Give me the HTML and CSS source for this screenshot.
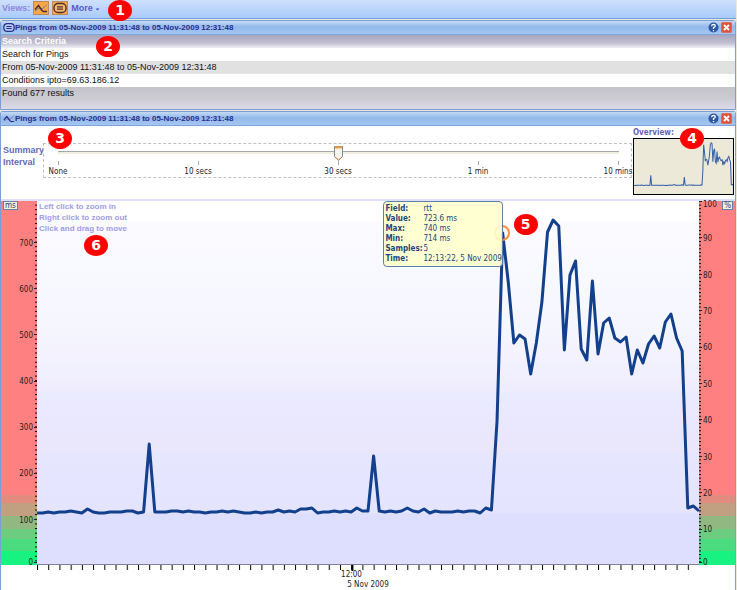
FILE: index.html
```html
<!DOCTYPE html>
<html lang="en">

<head>
    <meta charset="UTF-8">
    <meta name="viewport" content="width=device-width, initial-scale=1.0">
    <title>Pings</title>
    <link rel="stylesheet" href="styles.css">
</head>

<body>

    <!-- Icons used more than once -->
    <svg class="sprite" aria-hidden="true">
        <symbol id="wave" viewBox="0 0 14 12">
            <path d="M1 9 L4.5 6.5 L8 7 L12.5 3" fill="none" stroke="#77778c" stroke-width="1" />
            <path d="M1 7.5 L4.5 3.5 L8 8.5 Q9 9.8 10.5 9.5 H13" fill="none" stroke="currentColor" stroke-width="1.4" />
        </symbol>
        <symbol id="list" viewBox="0 0 14 12">
            <rect x="1" y="1.5" width="12" height="9" rx="4" fill="#ffffff33" stroke="currentColor" stroke-width="1.4" />
            <path d="M4 4.8h6M4 7.2h6" stroke="currentColor" stroke-width="1.2" />
        </symbol>
        <symbol id="help" viewBox="0 0 10 10">
            <circle cx="5" cy="5" r="4.5" fill="#2c57a4" />
            <path d="M3.3 3.8 Q3.4 2.2 5 2.2 Q6.8 2.3 6.6 3.8 Q6.4 4.6 5 5.2 V6.3 M5 7.2 V8.4" fill="none" stroke="#fff" stroke-width="1.2" />
        </symbol>
        <symbol id="close" viewBox="0 0 11 11">
            <rect x="0.5" y="0.5" width="10" height="10" rx="1" fill="#dd5340" stroke="#e06a58" />
            <path d="M3 3l5 5M8 3l-5 5" stroke="#fff" stroke-width="1.8" />
        </symbol>
    </svg>

    <nav class="toolbar">
        <span class="toolbar-label">Views:</span>
        <button class="view-button" aria-label="Graph view"><svg><use href="#wave" /></svg></button>
        <button class="view-button" aria-label="List view"><svg><use href="#list" /></svg></button>
        <button class="more-button">More <svg class="caret" viewBox="0 0 5 3"><path d="M0.5 0.5h4L2.5 2.5z" fill="#4a4ac0" /></svg></button>
        <span class="callout callout-1">1</span>
    </nav>

    <section class="panel criteria-panel">
        <header class="title-bar">
            <svg class="title-icon"><use href="#list" /></svg>
            <h2>Pings from 05-Nov-2009 11:31:48 to 05-Nov-2009 12:31:48</h2>
            <button class="title-button" aria-label="Help"><svg><use href="#help" /></svg></button>
            <button class="title-button" aria-label="Close"><svg><use href="#close" /></svg></button>
        </header>
        <table class="criteria">
            <thead>
                <tr><th>Search Criteria</th></tr>
            </thead>
            <tbody>
                <tr><td>Search for Pings</td></tr>
                <tr class="shaded"><td>From 05-Nov-2009 11:31:48 to 05-Nov-2009 12:31:48</td></tr>
                <tr><td>Conditions ipto=69.63.186.12</td></tr>
                <tr class="found"><td>Found 677 results</td></tr>
            </tbody>
        </table>
        <div class="criteria-foot"></div>
        <span class="callout callout-2">2</span>
    </section>

    <section class="panel graph-panel">
        <header class="title-bar">
            <svg class="title-icon"><use href="#wave" /></svg>
            <h2>Pings from 05-Nov-2009 11:31:48 to 05-Nov-2009 12:31:48</h2>
            <button class="title-button" aria-label="Help"><svg><use href="#help" /></svg></button>
            <button class="title-button" aria-label="Close"><svg><use href="#close" /></svg></button>
        </header>

        <div class="controls">
            <label class="interval-label" for="interval">Summary<br>Interval</label>
            <div class="interval">
                <input type="range" id="interval" min="0" max="4" value="2">
                <div class="interval-marks">
                    <span>None</span>
                    <span>10 secs</span>
                    <span>30 secs</span>
                    <span>1 min</span>
                    <span>10 mins</span>
                </div>
            </div>
            <div class="overview">
                <div class="overview-label">Overview:</div>
                <svg class="overview-graph" viewBox="0 0 118 364" preserveAspectRatio="none">
                    <use href="#rtt" class="overview-line" />
                </svg>
            </div>
            <span class="callout callout-3">3</span>
            <span class="callout callout-4">4</span>
        </div>

        <div class="graph">
            <div class="axis left-axis">
                <svg width="36" height="364">
                    <defs>
                        <pattern id="ms-ticks" y="364" width="3" height="4.62" patternUnits="userSpaceOnUse">
                            <rect width="3" height="1" />
                        </pattern>
                    </defs>
                    <rect x="34" width="2" height="364" fill="url(#ms-ticks)" />
                    <path d="M33 41.5h3M33 87.5h3M33 133.5h3M33 180.5h3M33 226.5h3M33 272.5h3M33 318.5h3M33 361.5h3" stroke="#222" />
                    <g text-anchor="end">
                        <text x="32" y="45">700</text>
                        <text x="32" y="91">600</text>
                        <text x="32" y="137">500</text>
                        <text x="32" y="183">400</text>
                        <text x="32" y="229">300</text>
                        <text x="32" y="275">200</text>
                        <text x="32" y="322">100</text>
                        <text x="32" y="364">0</text>
                    </g>
                </svg>
                <span class="unit">ms</span>
            </div>

            <div class="plot">
                <svg class="plot-line" viewBox="0 0 118 364" preserveAspectRatio="none">
                    <polyline id="rtt" vector-effect="non-scaling-stroke" points="
                        0,312 1,312 2,311 3,312 4,311 5,311 6,310 7,311 8,312 9,308
                        10,311 11,312 12,312 13,311 14,311 15,311 16,310 17,310 18,312 19,311
                        20,243 21,311 22,311 23,311 24,310 25,310 26,311 27,310 28,311 29,311
                        30,312 31,311 32,311 33,310 34,311 35,310 36,311 37,312 38,312 39,311
                        40,312 41,311 42,311 43,309 44,311 45,310 46,311 47,308 48,308 49,307
                        50,312 51,311 52,311 53,310 54,311 55,310 56,311 57,307 58,310 59,310
                        60,255 61,310 62,311 63,310 64,311 65,310 66,307 67,310 68,311 69,308
                        70,312 71,310 72,311 73,311 74,311 75,310 76,311 77,310 78,310 79,312
                        80,307 81,309 82,220 83,32 84,81 85,142 86,134 87,138 88,173 89,142
                        90,101 91,31 92,19 93,25 94,149 95,74 96,60 97,148 98,159 99,80
                        100,153 101,122 102,117 103,137 104,141 105,136 106,173 107,149 108,162 109,143
                        110,135 111,147 112,121 113,113 114,137 115,150 116,307 117,305 118,310" />
                </svg>
                <p class="hint">Left click to zoom in<br>Right click to zoom out<br>Click and drag to move</p>
                <span class="marker"></span>
                <dl class="tooltip">
                    <dt>Field:</dt><dd>rtt</dd>
                    <dt>Value:</dt><dd>723.6 ms</dd>
                    <dt>Max:</dt><dd>740 ms</dd>
                    <dt>Min:</dt><dd>714 ms</dd>
                    <dt>Samples:</dt><dd>5</dd>
                    <dt>Time:</dt><dd>12:13:22, 5 Nov 2009</dd>
                </dl>
                <span class="callout callout-5">5</span>
                <span class="callout callout-6">6</span>
            </div>

            <div class="axis right-axis">
                <svg width="36" height="364">
                    <defs>
                        <pattern id="pct-ticks" y="364" width="3" height="3.64" patternUnits="userSpaceOnUse">
                            <rect width="3" height="1" />
                        </pattern>
                    </defs>
                    <rect width="2" height="364" fill="url(#pct-ticks)" />
                    <path d="M0 0.5h3M0 36.5h3M0 73.5h3M0 109.5h3M0 146.5h3M0 182.5h3M0 218.5h3M0 255.5h3M0 291.5h3M0 328.5h3M0 361.5h3" stroke="#222" />
                    <text x="4" y="6">100</text>
                    <text x="4" y="40">90</text>
                    <text x="4" y="77">80</text>
                    <text x="4" y="113">70</text>
                    <text x="4" y="149">60</text>
                    <text x="4" y="186">50</text>
                    <text x="4" y="222">40</text>
                    <text x="4" y="259">30</text>
                    <text x="4" y="295">20</text>
                    <text x="4" y="331">10</text>
                    <text x="4" y="364">0</text>
                </svg>
                <span class="unit">%</span>
            </div>

            <div class="time-axis">
                <svg width="100%" height="25">
                    <defs>
                        <pattern id="time-ticks" width="1.695%" height="6" patternUnits="userSpaceOnUse">
                            <rect width="1" height="6" />
                        </pattern>
                    </defs>
                    <rect width="100%" height="5" fill="url(#time-ticks)" />
                    <rect x="47.5%" width="2" height="6" />
                    <text x="47.5%" y="12" text-anchor="middle">12:00</text>
                    <text x="50%" y="22" text-anchor="middle">5 Nov 2009</text>
                </svg>
            </div>
        </div>
    </section>

</body>

</html>
```

FILE: styles.css
```css
* {
    box-sizing: border-box;
}

body {
    margin: 0;
    padding-right: 1px;
    background: #ece9d8;
    font-family: "DejaVu Sans Condensed", "DejaVu Sans", sans-serif;
    font-size: 8px;
    color: #222;
}

button {
    padding: 0;
    border: 0;
    background: none;
    font: inherit;
}

.sprite {
    position: absolute;
    width: 0;
    height: 0;
}

.toolbar {
    position: relative;
    display: flex;
    align-items: center;
    gap: 4px;
    height: 19px;
    padding: 0 2px 2px;
    border-bottom: 1px solid #6f9fdc;
    background: linear-gradient(#cfe0fb, #a9cbfa);
    font-family: "Liberation Sans", sans-serif;
    font-size: 9px;
    font-weight: bold;
}

.toolbar-label {
    color: #9088dc;
}

.view-button {
    display: flex;
    align-items: center;
    justify-content: center;
    width: 14px;
    height: 12px;
    background: #f9a54a;
    outline: 1px solid #c08a58;
    color: #4a3030;
}

.view-button svg {
    width: 14px;
    height: 12px;
}

.view-button + .view-button {
    margin-left: 1px;
}

.more-button {
    color: #5b5bc8;
}

.caret {
    width: 5px;
    height: 3px;
}

.panel {
    position: relative;
    border: 1px solid #7a9fd8;
    border-radius: 3px 3px 0 0;
}

.criteria-panel {
    margin-top: 1px;
}

.graph-panel {
    margin-top: 1px;
    border-bottom: 0;
    background: #fff;
}

.title-bar {
    display: flex;
    align-items: center;
    height: 14px;
    padding: 0 3px 0 2px;
    border-bottom: 1px solid #7fa6dc;
    background: linear-gradient(#c5daf4, #93b9ea 45%, #a4c6f2);
    color: #2c2c8c;
}

.title-bar h2 {
    flex: 1;
    margin: 0;
    font-size: 8px;
    font-family: "Liberation Sans", sans-serif;
}

.title-icon {
    width: 12px;
    height: 11px;
}

.title-button {
    display: flex;
    margin-left: 2px;
}

.title-button svg {
    width: 11px;
    height: 11px;
}

.criteria {
    width: 100%;
    border-collapse: collapse;
    font-family: "Liberation Sans", sans-serif;
    font-size: 9px;
    line-height: 13px;
    color: #111;
    background: #fff;
}

.criteria th,
.criteria td {
    padding: 0 1px;
    text-align: left;
}

.criteria th {
    background: linear-gradient(#a9a6bd, #c0bed0 60%, #f0eff6);
    color: #fff;
}

.criteria .shaded {
    background: #e1e1e1;
}

.criteria .found {
    background: linear-gradient(#c4c3cb, #ccccd2);
}

.criteria-foot {
    height: 9px;
    background: linear-gradient(#cfcdd9, #dcdae8);
}

.controls {
    position: relative;
    display: flex;
    height: 75px;
    padding: 0 0 0 2px;
    border-bottom: 2px solid #dedeff;
}

.interval-label {
    width: 40px;
    margin-top: 18px;
    font-family: "Liberation Sans", sans-serif;
    font-size: 9px;
    font-weight: bold;
    line-height: 12px;
    color: #6868b8;
}

.interval {
    flex: 1;
    height: 35px;
    margin-top: 17px;
    border: 1px dashed #c0c0c0;
}

.interval input {
    display: block;
    appearance: none;
    width: calc(100% - 18px);
    height: 17px;
    margin: 0 0 0 10px;
    background: linear-gradient(#a5a9a5, #a5a9a5) center 7px / calc(100% - 8px) 1px no-repeat, linear-gradient(#f0efe2, #f0efe2) center 8px / calc(100% - 8px) 2px no-repeat;
}

.interval input::-webkit-slider-thumb {
    appearance: none;
    width: 9px;
    height: 16px;
    border: 0;
    background: url("data:image/svg+xml,%3Csvg xmlns='http://www.w3.org/2000/svg' width='9' height='16'%3E%3Cpath d='M.5 1.5h8v10l-4 4-4-4z' fill='%23f4f4ee' stroke='%237f8c96'/%3E%3Cpath d='M1 2.5h7' stroke='%23f5a03c' stroke-width='2'/%3E%3Cpath d='M1 12l3.5 3 3.5-3' fill='none' stroke='%23d08840'/%3E%3C/svg%3E") no-repeat;
}

.interval-marks {
    display: flex;
    justify-content: space-between;
    margin-right: -17px;
    margin-left: -16px;
}

.interval-marks span {
    width: 60px;
    padding-top: 5px;
    background: linear-gradient(#aaa, #aaa) center 0 / 1px 4px no-repeat;
    line-height: 11px;
    text-align: center;
}

.overview {
    width: 102px;
    margin-left: 1px;
}

.overview-label {
    height: 12px;
    line-height: 14px;
    font-weight: bold;
    color: #6464bc;
}

.overview-graph {
    display: block;
    width: 101px;
    height: 57px;
    border: 1px solid #000;
    padding: 1px 0;
    background: #ece9d8;
}

.overview-line {
    fill: none;
    stroke: #3560a8;
    stroke-width: 1;
}

.graph {
    display: grid;
    grid-template-columns: 36px 1fr 36px;
}

.graph text {
    font-size: 8px;
    fill: #222;
}

.axis {
    position: relative;
    height: 364px;
    background: linear-gradient(#ff8080 294px, #e08d80 294px, #e08d80 302px, #c0a080 302px, #c0a080 315px, #90b880 315px, #90b880 328px, #6ccc80 328px, #6ccc80 338px, #4cdc80 338px, #4cdc80 350px, #18f280 350px);
}

.axis svg {
    display: block;
    overflow: visible;
}

.unit {
    position: absolute;
    top: 0;
    left: 2px;
    height: 9px;
    padding: 0 1px;
    border: 1px solid #6a80a8;
    background: #f0efd8;
    line-height: 7px;
    color: #24468c;
}

.right-axis .unit {
    right: 2px;
    left: auto;
}

.plot {
    position: relative;
    height: 364px;
    border-bottom: 1px solid #8080a0;
    background: linear-gradient(#fff 20px, #fafaff 22px, #f6f6ff 125px, #efedfd 190px, #eaeaff 192px, #eae6fc 250px, #e6e6ff 254px, #e4e4ff 312px, #dedeff 313px);
}

.plot-line {
    display: block;
    width: 100%;
    height: 364px;
    fill: none;
    stroke: #12408c;
    stroke-width: 3px;
    stroke-linejoin: round;
}

.hint {
    position: absolute;
    top: 0;
    left: 2px;
    margin: 0;
    font-family: "Liberation Sans", sans-serif;
    font-weight: bold;
    line-height: 11px;
    color: #a09ce8;
}

.marker {
    position: absolute;
    top: 24px;
    left: calc(70% + 2px);
    width: 16px;
    height: 16px;
    margin-left: -8px;
    border: 2px solid #f7903c;
    border-radius: 50%;
}

.tooltip {
    position: absolute;
    top: 0;
    right: calc(30% - 3px);
    display: grid;
    grid-template-columns: 38px 1fr;
    width: 120px;
    margin: 0;
    padding: 2px 1px;
    border: 1px solid #6080a8;
    border-radius: 4px;
    background: rgba(255, 255, 204, 0.9);
    line-height: 10px;
    color: #24467c;
    white-space: nowrap;
}

.tooltip dt {
    font-weight: bold;
}

.tooltip dd {
    margin: 0;
}

.time-axis {
    grid-column: 2;
    height: 25px;
}

.time-axis svg {
    display: block;
}

/* Numbered callouts */
.callout {
    position: absolute;
    width: 24px;
    height: 21px;
    border-radius: 50%;
    background: #f00;
    font-family: "DejaVu Sans", sans-serif;
    font-size: 14px;
    font-weight: bold;
    line-height: 21px;
    text-align: center;
    color: #fff;
}

.callout-1 {
    top: 0;
    left: 108px;
    z-index: 1;
}

.callout-2 {
    top: 15px;
    left: 95px;
}

.callout-3 {
    top: 2px;
    left: 47px;
}

.callout-4 {
    top: 2px;
    right: 31px;
}

.callout-5 {
    top: 13px;
    left: 72%;
}

.callout-6 {
    top: 34px;
    left: 47px;
}
```
